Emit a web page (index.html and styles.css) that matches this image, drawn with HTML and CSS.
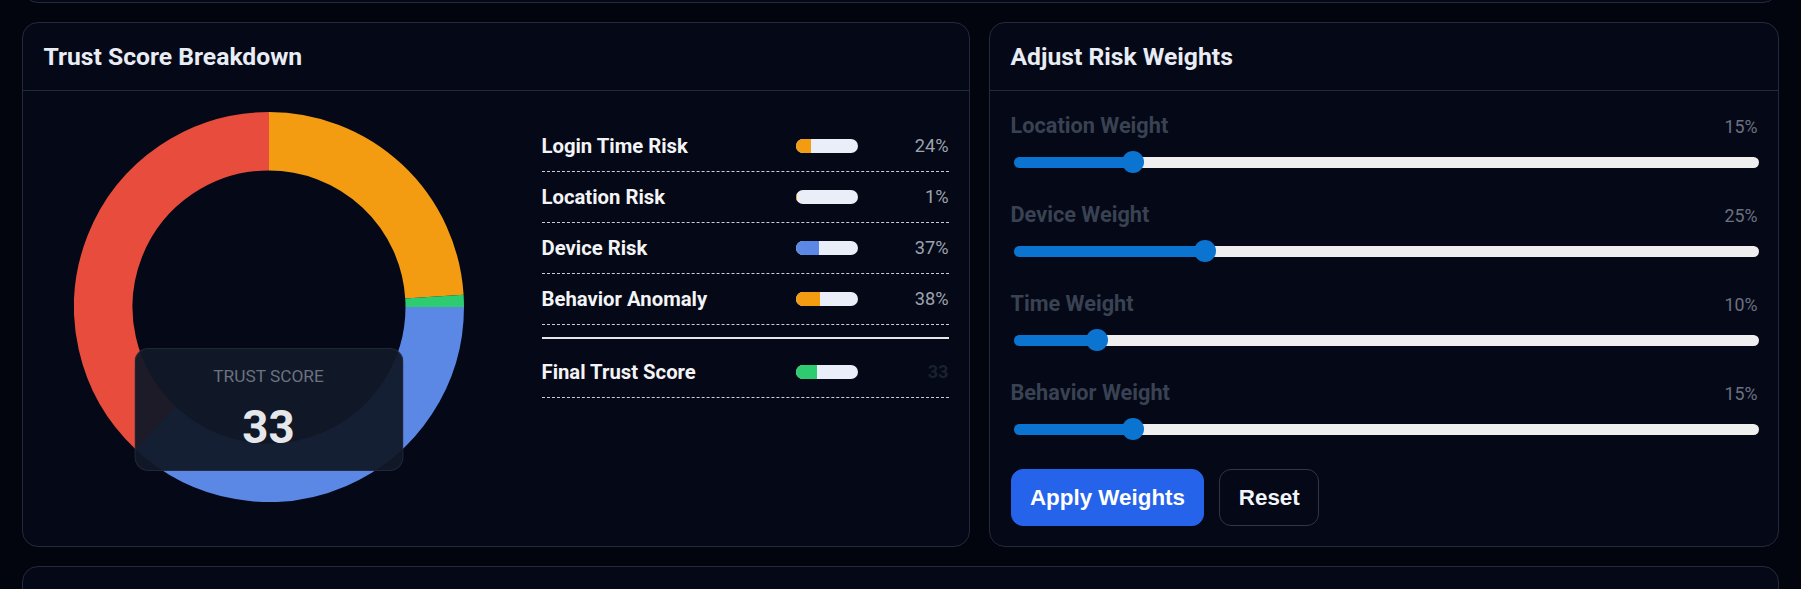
FILE: index.html
```html
<!DOCTYPE html>
<html lang="en">
<head>
<meta charset="utf-8">
<title>Trust Score</title>
<link rel="stylesheet" href="styles.css">
</head>
<body>
<main class="page">
  <section class="card card-top"></section>
  <div class="grid">
    <section class="card">
      <header class="card-header"><h2 class="card-title">Trust Score Breakdown</h2></header>
      <div class="card-body breakdown">
        <div class="chart">
          <svg class="donut" viewBox="0 0 390 390" width="390" height="390">
            <g fill="none" stroke-width="58.5">
              <path d="M195 29.25 A165.75 165.75 0 0 1 360.42 184.59" stroke="#f39c12"/>
              <path d="M360.42 184.59 A165.75 165.75 0 0 1 360.75 195" stroke="#2ecc71"/>
              <path d="M360.75 195 A165.75 165.75 0 0 1 81.54 315.83" stroke="#5b88e5"/>
              <path d="M81.54 315.83 A165.75 165.75 0 0 1 195 29.25" stroke="#e74c3c"/>
            </g>
          </svg>
          <div class="score-box">
            <div class="score-label">TRUST SCORE</div>
            <div class="score-value">33</div>
          </div>
        </div>
        <div class="factors">
          <div class="factor"><span class="factor-name">Login Time Risk</span><span class="bar"><span class="bar-fill fill-orange" style="width:24%"></span></span><span class="factor-value">24%</span></div>
          <div class="factor"><span class="factor-name">Location Risk</span><span class="bar"><span class="bar-fill fill-orange" style="width:1%"></span></span><span class="factor-value">1%</span></div>
          <div class="factor"><span class="factor-name">Device Risk</span><span class="bar"><span class="bar-fill fill-blue" style="width:37%"></span></span><span class="factor-value">37%</span></div>
          <div class="factor"><span class="factor-name">Behavior Anomaly</span><span class="bar"><span class="bar-fill fill-orange" style="width:38%"></span></span><span class="factor-value">38%</span></div>
          <div class="separator"></div>
          <div class="factor factor-final"><span class="factor-name">Final Trust Score</span><span class="bar"><span class="bar-fill fill-green" style="width:33%"></span></span><span class="factor-value">33</span></div>
        </div>
      </div>
    </section>
    <section class="card">
      <header class="card-header"><h2 class="card-title">Adjust Risk Weights</h2></header>
      <div class="card-body weights">
        <div class="weight">
          <div class="weight-head"><span class="weight-name">Location Weight</span><span class="weight-value">15%</span></div>
          <input class="slider" type="range" min="0" max="100" value="15" style="--v:15%">
        </div>
        <div class="weight">
          <div class="weight-head"><span class="weight-name">Device Weight</span><span class="weight-value">25%</span></div>
          <input class="slider" type="range" min="0" max="100" value="25" style="--v:25%">
        </div>
        <div class="weight">
          <div class="weight-head"><span class="weight-name">Time Weight</span><span class="weight-value">10%</span></div>
          <input class="slider" type="range" min="0" max="100" value="10" style="--v:10%">
        </div>
        <div class="weight">
          <div class="weight-head"><span class="weight-name">Behavior Weight</span><span class="weight-value">15%</span></div>
          <input class="slider" type="range" min="0" max="100" value="15" style="--v:15%">
        </div>
        <div class="actions">
          <button class="btn btn-primary" type="button">Apply Weights</button>
          <button class="btn btn-ghost" type="button">Reset</button>
        </div>
      </div>
    </section>
  </div>
  <section class="card card-bottom"></section>
</main>
</body>
</html>
```

FILE: styles.css
```css
* { box-sizing: border-box; }
html, body { margin: 0; background: #03050e; }
body {
  font-family: Roboto, "Noto Sans", sans-serif;
  color: #e5e7eb;
  overflow: hidden;
}
.page {
  display: flex;
  flex-direction: column;
  gap: 19px;
  padding: 0 22px;
  margin-top: -77px;
}
.card {
  background: #050816;
  border: 1px solid #232a3b;
  border-radius: 16px;
}
.card-top { height: 80px; }
.card-bottom { height: 120px; }
.grid {
  display: grid;
  grid-template-columns: 1.2fr 1fr;
  gap: 19px;
}
.card-header {
  padding: 19.2px 20.5px 17.6px;
  border-bottom: 1px solid #232a3b;
}
.card-title {
  margin: 0;
  font-size: 24.7px;
  line-height: 30.6px;
  font-weight: 700;
  color: #e8ecf4;
}
.card-body { padding: 20.5px; }
.weights { padding-top: 21.7px; padding-bottom: 19.5px; }

.breakdown {
  display: grid;
  grid-template-columns: 450px 1fr;
  gap: 48px;
  align-items: start;
}
.chart { position: relative; height: 390px; }
.donut { display: block; margin: 0 auto; }
.score-box {
  position: absolute;
  left: 50%;
  top: 236px;
  width: 269px;
  height: 123px;
  transform: translateX(-50%);
  background: rgba(17, 24, 39, 0.94);
  border: 1px solid rgba(255, 255, 255, 0.07);
  border-radius: 14px;
  text-align: center;
  padding-top: 15.8px;
}
.score-label {
  font-size: 17.3px;
  line-height: 22px;
  color: #6b7280;
}
.score-value {
  margin-top: 13.5px;
  font-size: 45.6px;
  line-height: 55px;
  font-weight: 700;
  color: #e5e7eb;
}

.factors { padding-top: 9px; }
.factor {
  display: flex;
  align-items: center;
  padding: 12px 0;
  line-height: 26px;
  border-bottom: 1px dashed #c9ced8;
}
.factor-name {
  flex: 1;
  font-size: 20.3px;
  font-weight: 700;
  color: #f3f4f6;
}
.bar {
  display: flex;
  width: 62px;
  height: 14.7px;
  border-radius: 8px;
  background: #e9eef8;
  overflow: hidden;
}
.bar-fill { height: 100%; }
.fill-orange { background: #f39c12; }
.fill-blue { background: #5b88e5; }
.fill-green { background: #2ecc71; }
.factor-value {
  width: 90.3px;
  text-align: right;
  font-size: 18.2px;
  color: #9ca3af;
}
.factor-final .factor-value { color: #1a2130; font-weight: 700; }
.separator {
  height: 2px;
  background: #e5e7eb;
  margin: 12px 0 8px;
}

.weight { margin-bottom: 28.7px; }
.weight-head {
  display: flex;
  justify-content: space-between;
  align-items: baseline;
  line-height: 26.7px;
  margin-bottom: 10.6px;
}
.weight-name {
  font-size: 21.7px;
  font-weight: 700;
  color: #394253;
}
.weight-value {
  font-size: 17.8px;
  color: #6b7280;
}
.slider {
  -webkit-appearance: none;
  appearance: none;
  display: block;
  width: calc(100% - 2px);
  height: 22px;
  margin: 0 0 0 3px;
  background: transparent;
}
.slider::-webkit-slider-runnable-track {
  height: 11px;
  border-radius: 6px;
  background: linear-gradient(to right, #0b74d1 var(--v), #efefef var(--v));
}
.slider::-webkit-slider-thumb {
  -webkit-appearance: none;
  appearance: none;
  width: 22px;
  height: 22px;
  margin-top: -5.5px;
  border: none;
  border-radius: 50%;
  background: #0b74d1;
}

.actions { display: flex; gap: 15px; }
.btn {
  font-family: "Liberation Sans", Arial, sans-serif;
  font-weight: 700;
  font-size: 22.4px;
  line-height: normal;
  padding: 14.5px 18.4px;
  border-radius: 12px;
  border: 1px solid transparent;
}
.btn-primary { background: #2563eb; border-color: #2563eb; color: #ffffff; }
.btn-ghost { background: transparent; border-color: #2f3647; color: #f1f5f9; }
```
